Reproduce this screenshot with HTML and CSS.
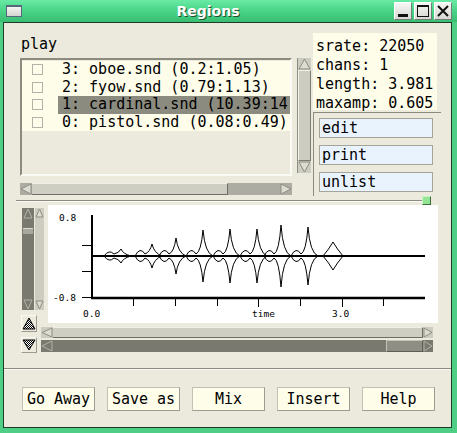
FILE: index.html
```html
<!DOCTYPE html>
<html>
<head>
<meta charset="utf-8">
<link rel="stylesheet" href="styles.css">
</head>
<body>
<div class="win">
  <div class="titlebar">
    <div class="wicon"></div>
    <div class="title">Regions</div>
    <div class="tbtns">
      <div class="tbtn"><svg width="16" height="16" viewBox="0 0 16 16"><rect x="3" y="11" width="10" height="3" fill="#111"/></svg></div>
      <div class="tbtn"><svg width="16" height="16" viewBox="0 0 16 16"><rect x="2.5" y="2.5" width="11" height="11" fill="none" stroke="#111"/><rect x="2" y="2" width="12" height="2" fill="#111"/></svg></div>
      <div class="tbtn"><svg width="16" height="16" viewBox="0 0 16 16"><path d="M3 3L13 13M13 3L3 13" stroke="#111" stroke-width="2"/></svg></div>
    </div>
  </div>
  <div class="frame">
    <div class="top">
      <div class="leftcol">
        <div class="lbl">play</div>
        <div class="listrow">
          <div class="listbox">
            <div class="row"><span class="cell"><span class="cb"></span></span><span class="txt">3: oboe.snd (0.2:1.05)</span></div>
            <div class="row"><span class="cell"><span class="cb"></span></span><span class="txt">2: fyow.snd (0.79:1.13)</span></div>
            <div class="row sel"><span class="cell"><span class="cb"></span></span><span class="txt">1: cardinal.snd (10.39:14.12)</span></div>
            <div class="row"><span class="cell"><span class="cb"></span></span><span class="txt">0: pistol.snd (0.08:0.49)</span></div>
          </div>
          <div class="vsb lt">
            <svg class="arr" width="13" height="12" viewBox="0 0 13 12"><polygon points="6.5,1 12,11 1,11" class="al"/></svg>
            <div class="vthumb"></div>
            <svg class="arr" width="13" height="12" viewBox="0 0 13 12"><polygon points="6.5,11 1,1 12,1" class="al"/></svg>
          </div>
        </div>
        <div class="hsb top-h">
          <svg class="arr" width="12" height="12" viewBox="0 0 12 12"><polygon points="1,6 11,1 11,11" class="al"/></svg>
          <div class="hthumb"></div>
          <div class="htrough"></div>
          <svg class="arr" width="12" height="12" viewBox="0 0 12 12"><polygon points="11,6 1,1 1,11" class="al"/></svg>
        </div>
      </div>
      <div class="rightcol">
        <div class="info">
          <div>srate: 22050</div>
          <div>chans: 1</div>
          <div>length: 3.981</div>
          <div>maxamp: 0.605</div>
        </div>
        <div class="bpanel">
          <div class="sbtn">edit</div>
          <div class="sbtn">print</div>
          <div class="sbtn">unlist</div>
        </div>
      </div>
    </div>
    <div class="sash"><div class="sashline"></div><div class="grip"></div></div>
    <div class="graph">
      <div class="rowa">
        <div class="vgroup">
          <div class="vsb dk">
            <svg class="arr" width="10" height="11" viewBox="0 0 10 11"><polygon points="5,1 9,10 1,10" class="ad"/></svg>
            <div class="dthumb"></div>
            <div class="spacer"></div>
            <svg class="arr" width="10" height="11" viewBox="0 0 10 11"><polygon points="5,10 1,1 9,1" class="ad"/></svg>
          </div>
          <div class="vsb lt narrow">
            <svg class="arr" width="9" height="10" viewBox="0 0 9 10"><polygon points="4.5,1 8,9 1,9" class="al"/></svg>
            <div class="spacer"></div>
            <svg class="arr" width="9" height="10" viewBox="0 0 9 10"><polygon points="4.5,9 1,1 8,1" class="al"/></svg>
          </div>
        </div>
        <svg class="canvas" width="390" height="118" viewBox="0 0 390 118">
          <g stroke="#000" fill="none">
            <path d="M44 10V94" stroke-width="2"/>
            <path d="M34 40.5H44M34 66.5H44M34 92.5H44"/>
            <path d="M43 93H377" stroke-width="2.5"/>
            <path d="M44 51H377" stroke-width="2"/>
            <path d="M85.5 93V101M127.5 93V101M169.5 93V101M210.5 93V102M252.5 93V101M294.5 93V102M335.5 93V101"/>
            <g stroke-width="1">
              <path d="M56,51 Q61,44 66,49 Q71,48 73,44 Q75,49 83,51 M56,51 Q61,58 66,53 Q71,54 73,58 Q75,53 83,51"/>
              <path d="M87,51 Q92,41 97,49 Q102,47 104,39 Q106,48 114,51 M87,51 Q92,61 97,53 Q102,55 104,63 Q106,54 114,51"/>
              <path d="M111,51 Q116,41 121,49 Q126,47 128,33 Q130,48 138,51 M111,51 Q116,61 121,53 Q126,55 128,69 Q130,54 138,51"/>
              <path d="M138,51 Q143,41 148,49 Q153,47 155,25 Q157,48 165,51 M138,51 Q143,61 148,53 Q153,55 155,77 Q157,54 165,51"/>
              <path d="M165,51 Q170,41 175,49 Q180,47 182,24 Q184,48 192,51 M165,51 Q170,61 175,53 Q180,55 182,78 Q184,54 192,51"/>
              <path d="M192,51 Q197,41 202,49 Q207,47 209,24 Q211,48 219,51 M192,51 Q197,61 202,53 Q207,55 209,78 Q211,54 219,51"/>
              <path d="M216,51 Q221,41 226,49 Q231,47 233,20 Q235,48 243,51 M216,51 Q221,61 226,53 Q231,55 233,82 Q235,54 243,51"/>
              <path d="M243,51 Q248,41 253,49 Q258,47 260,22 Q262,48 270,51 M243,51 Q248,61 253,53 Q258,55 260,80 Q262,54 270,51"/>
              <path d="M275,51 Q281,44 285,37 Q289,44 295,51 M275,51 Q281,58 285,65 Q289,58 295,51"/>
            </g>
          </g>
          <g class="axl">
            <text x="11" y="16">0.8</text>
            <text x="5" y="96">-0.8</text>
            <text x="35" y="112">0.0</text>
            <text x="204" y="112">time</text>
            <text x="284" y="112">3.0</text>
          </g>
        </svg>
      </div>
      <div class="rowb">
        <div class="tris">
          <div class="tri t1"><svg width="14" height="15" viewBox="0 0 14 15"><defs><pattern id="ck1" width="2" height="2" patternUnits="userSpaceOnUse"><rect width="2" height="2" fill="#fff"/><rect width="1" height="1" fill="#000"/><rect x="1" y="1" width="1" height="1" fill="#000"/></pattern></defs><polygon points="7,2 13,13 1,13" fill="url(#ck1)" stroke="#000"/></svg></div>
          <div class="tri t2"><svg width="14" height="14" viewBox="0 0 14 14"><defs><pattern id="ck2" width="2" height="2" patternUnits="userSpaceOnUse"><rect width="2" height="2" fill="#fff"/><rect width="1" height="1" fill="#000"/><rect x="1" y="1" width="1" height="1" fill="#000"/></pattern></defs><polygon points="7,12 13,2 1,2" fill="url(#ck2)" stroke="#000"/></svg></div>
        </div>
        <div class="hcol">
          <div class="hsb g1">
            <svg class="arr" width="12" height="11" viewBox="0 0 12 11"><polygon points="1,5.5 11,1 11,10" class="al"/></svg>
            <div class="gbody"></div>
            <svg class="arr" width="10" height="11" viewBox="0 0 10 11"><polygon points="9,5.5 1,1 1,10" class="al"/></svg>
          </div>
          <div class="hsb g2">
            <svg class="arr" width="12" height="12" viewBox="0 0 12 12"><polygon points="1,6 11,1 11,11" class="ad"/></svg>
            <div class="spacer"></div>
            <div class="gthumb"></div>
            <svg class="arr" width="10" height="12" viewBox="0 0 10 12"><polygon points="9,6 1,1 1,11" class="ad"/></svg>
          </div>
        </div>
      </div>
    </div>
    <div class="sep"></div>
    <div class="btnrow">
      <div class="pbtn">Go Away</div>
      <div class="pbtn">Save as</div>
      <div class="pbtn">Mix</div>
      <div class="pbtn">Insert</div>
      <div class="pbtn">Help</div>
    </div>
  </div>
</div>
</body>
</html>
```
FILE: styles.css
```css
* { box-sizing: border-box; }
html, body { margin: 0; padding: 0; }
body {
  width: 457px;
  height: 433px;
  overflow: hidden;
  font-family: "DejaVu Sans Mono", monospace;
  font-size: 15px;
  color: #000;
}
svg { display: block; }

.win {
  width: 457px;
  height: 433px;
  background: #4fcf86;
  display: flex;
  flex-direction: column;
}
.titlebar {
  height: 22px;
  display: flex;
  align-items: center;
  background: linear-gradient(#6aeaa5, #4ad689 45%, #3abd72);
}
.wicon {
  width: 16px;
  height: 12px;
  margin-left: 6px;
  background: linear-gradient(#f4f4f2, #d4d4d0);
  border: 1px solid #56677a;
  border-top-width: 2px;
}
.title {
  flex: 1;
  text-align: center;
  font: bold 14px "DejaVu Sans", sans-serif;
  color: #fff;
  text-shadow: 1px 1px 0 #1f4f30;
}
.tbtns { display: flex; gap: 2px; margin-right: 5px; }
.tbtn {
  width: 18px;
  height: 18px;
  background: linear-gradient(#f6f6f4, #d6d6d2);
  border: 1px solid;
  border-color: #fff #6f7f75 #6f7f75 #fff;
}

.frame {
  flex: 1;
  margin: 0 5px 5px 3px;
  border: 1px solid #1d3b27;
  background: #ebeadd;
  display: flex;
  flex-direction: column;
}

/* top section */
.top { height: 173px; display: flex; }
.leftcol { margin-left: 16px; width: 291px; display: flex; flex-direction: column; }
.lbl { height: 35px; padding: 13px 0 0 1px; line-height: 17.5px; }
.listrow { display: flex; height: 118px; }
.listbox {
  width: 272px;
  height: 118px;
  border: 2px solid;
  border-color: #8c8b80 #fbfbf6 #fbfbf6 #8c8b80;
  padding-top: 1px;
}
.row { display: flex; height: 17.5px; line-height: 17.5px; background: #fdfdea; white-space: nowrap; overflow: hidden; }
.cell { width: 36px; flex: none; display: flex; align-items: center; }
.cb { width: 11px; height: 11px; margin-left: 10px; border: 1px solid #b3b2a8; background: #fdfdea; }
.txt { flex: 1; padding-left: 4px; overflow: hidden; }
.row.sel .txt { background: #8c8b80; }

.vsb { display: flex; flex-direction: column; }
.vsb.lt { margin-left: 5px; width: 14px; height: 115px; background: #cdccc0; border-left: 1px solid #8e8d83; }
.vthumb { flex: 1; background: #cdccc0; border: 1px solid; border-color: #f4f4ee #7d7c72 #7d7c72 #f4f4ee; }
.al { fill: #dddcd1; stroke: #8e8d83; stroke-width: 1; }
.ad { fill: #7a796f; stroke: #b3b2a7; stroke-width: 1; }
.spacer { flex: 1; }

.hsb { display: flex; }
.top-h { margin-top: 7px; width: 272px; height: 12px; background: #adaca2; }
.hthumb { width: 196px; background: #cfcec3; border-right: 1px solid #6f6e66; border-bottom: 1px solid #6f6e66; border-top: 1px solid #f0f0ea; }
.htrough { flex: 1; background: #adaca2; }

.rightcol { margin-left: 2px; width: 128px; display: flex; flex-direction: column; }
.info {
  margin-top: 10px;
  width: 124px;
  height: 77px;
  background: #fdfdea;
  padding: 4px 0 0 3px;
  line-height: 19px;
  white-space: nowrap;
}
.bpanel {
  margin-top: 2px;
  height: 84px;
  border-left: 1px solid #8c8b80;
  border-top: 1px solid #8c8b80;
  padding: 5px 0 0 5px;
  display: flex;
  flex-direction: column;
  gap: 7px;
}
.sbtn {
  width: 114px;
  height: 20px;
  background: #e9f3fd;
  border: 1px solid #a5a49a;
  padding-left: 2px;
  line-height: 18px;
}

/* sash */
.sash { height: 9px; display: flex; align-items: center; }
.sashline { margin-left: 12px; flex: 1; height: 2px; border-top: 1px solid #8c8b80; border-bottom: 1px solid #fbfbf6; }
.grip { width: 9px; height: 9px; margin-right: 20px; background: #93e593; border: 1px solid; border-color: #c8f5c8 #3d6b3d #3d6b3d #c8f5c8; }

/* graph */
.rowa { display: flex; height: 118px; }
.vgroup { margin: 3px 0 0 18px; display: flex; gap: 1px; height: 102px; }
.vsb.dk { width: 12px; height: 102px; background: #7a796f; padding: 0 1px; }
.dthumb { margin-top: 9px; height: 6px; background: #a9a89e; border-top: 1px solid #dcdbd0; }
.vsb.lt.narrow { margin-left: 0; width: 9px; height: 102px; border-left: none; }
.canvas { margin-left: 4px; background: #fff; }
.axl text { font-family: "DejaVu Sans Mono", monospace; font-size: 9.5px; fill: #000; }

.rowb { display: flex; margin-top: -8px; align-items: flex-start; }
.tris { margin-left: 17px; width: 16px; display: flex; flex-direction: column; gap: 5px; }
.tri {
  width: 16px;
  background: #ebeadd;
  border: 1px solid;
  border-color: #fbfbf6 #9c9b91 #9c9b91 #fbfbf6;
}
.t1 { height: 17px; }
.t2 { height: 16px; }
.hcol { margin: 12px 0 0 4px; width: 392px; }
.g1 { height: 11px; background: #cdccc0; margin-bottom: 2px; }
.gbody { flex: 1; background: #cfcec3; border-right: 1px solid #6f6e66; border-bottom: 1px solid #6f6e66; border-top: 1px solid #f0f0ea; }
.g2 { height: 12px; background: #7a796f; }
.gthumb { width: 37px; background: #8f8e85; border: 1px solid; border-color: #c4c3b8 #5d5c55 #5d5c55 #c4c3b8; }

/* bottom */
.sep { margin-top: 15px; height: 2px; border-top: 1px solid #8c8b80; border-bottom: 1px solid #fbfbf6; }
.btnrow { margin: 17px 0 0 18px; display: flex; gap: 12px; }
.pbtn {
  width: 73px;
  height: 24px;
  background: #fdfdea;
  border: 1px solid;
  border-color: #c2c1b6 #9d9c92 #9d9c92 #c2c1b6;
  text-align: center;
  line-height: 22px;
  white-space: nowrap;
}
```
